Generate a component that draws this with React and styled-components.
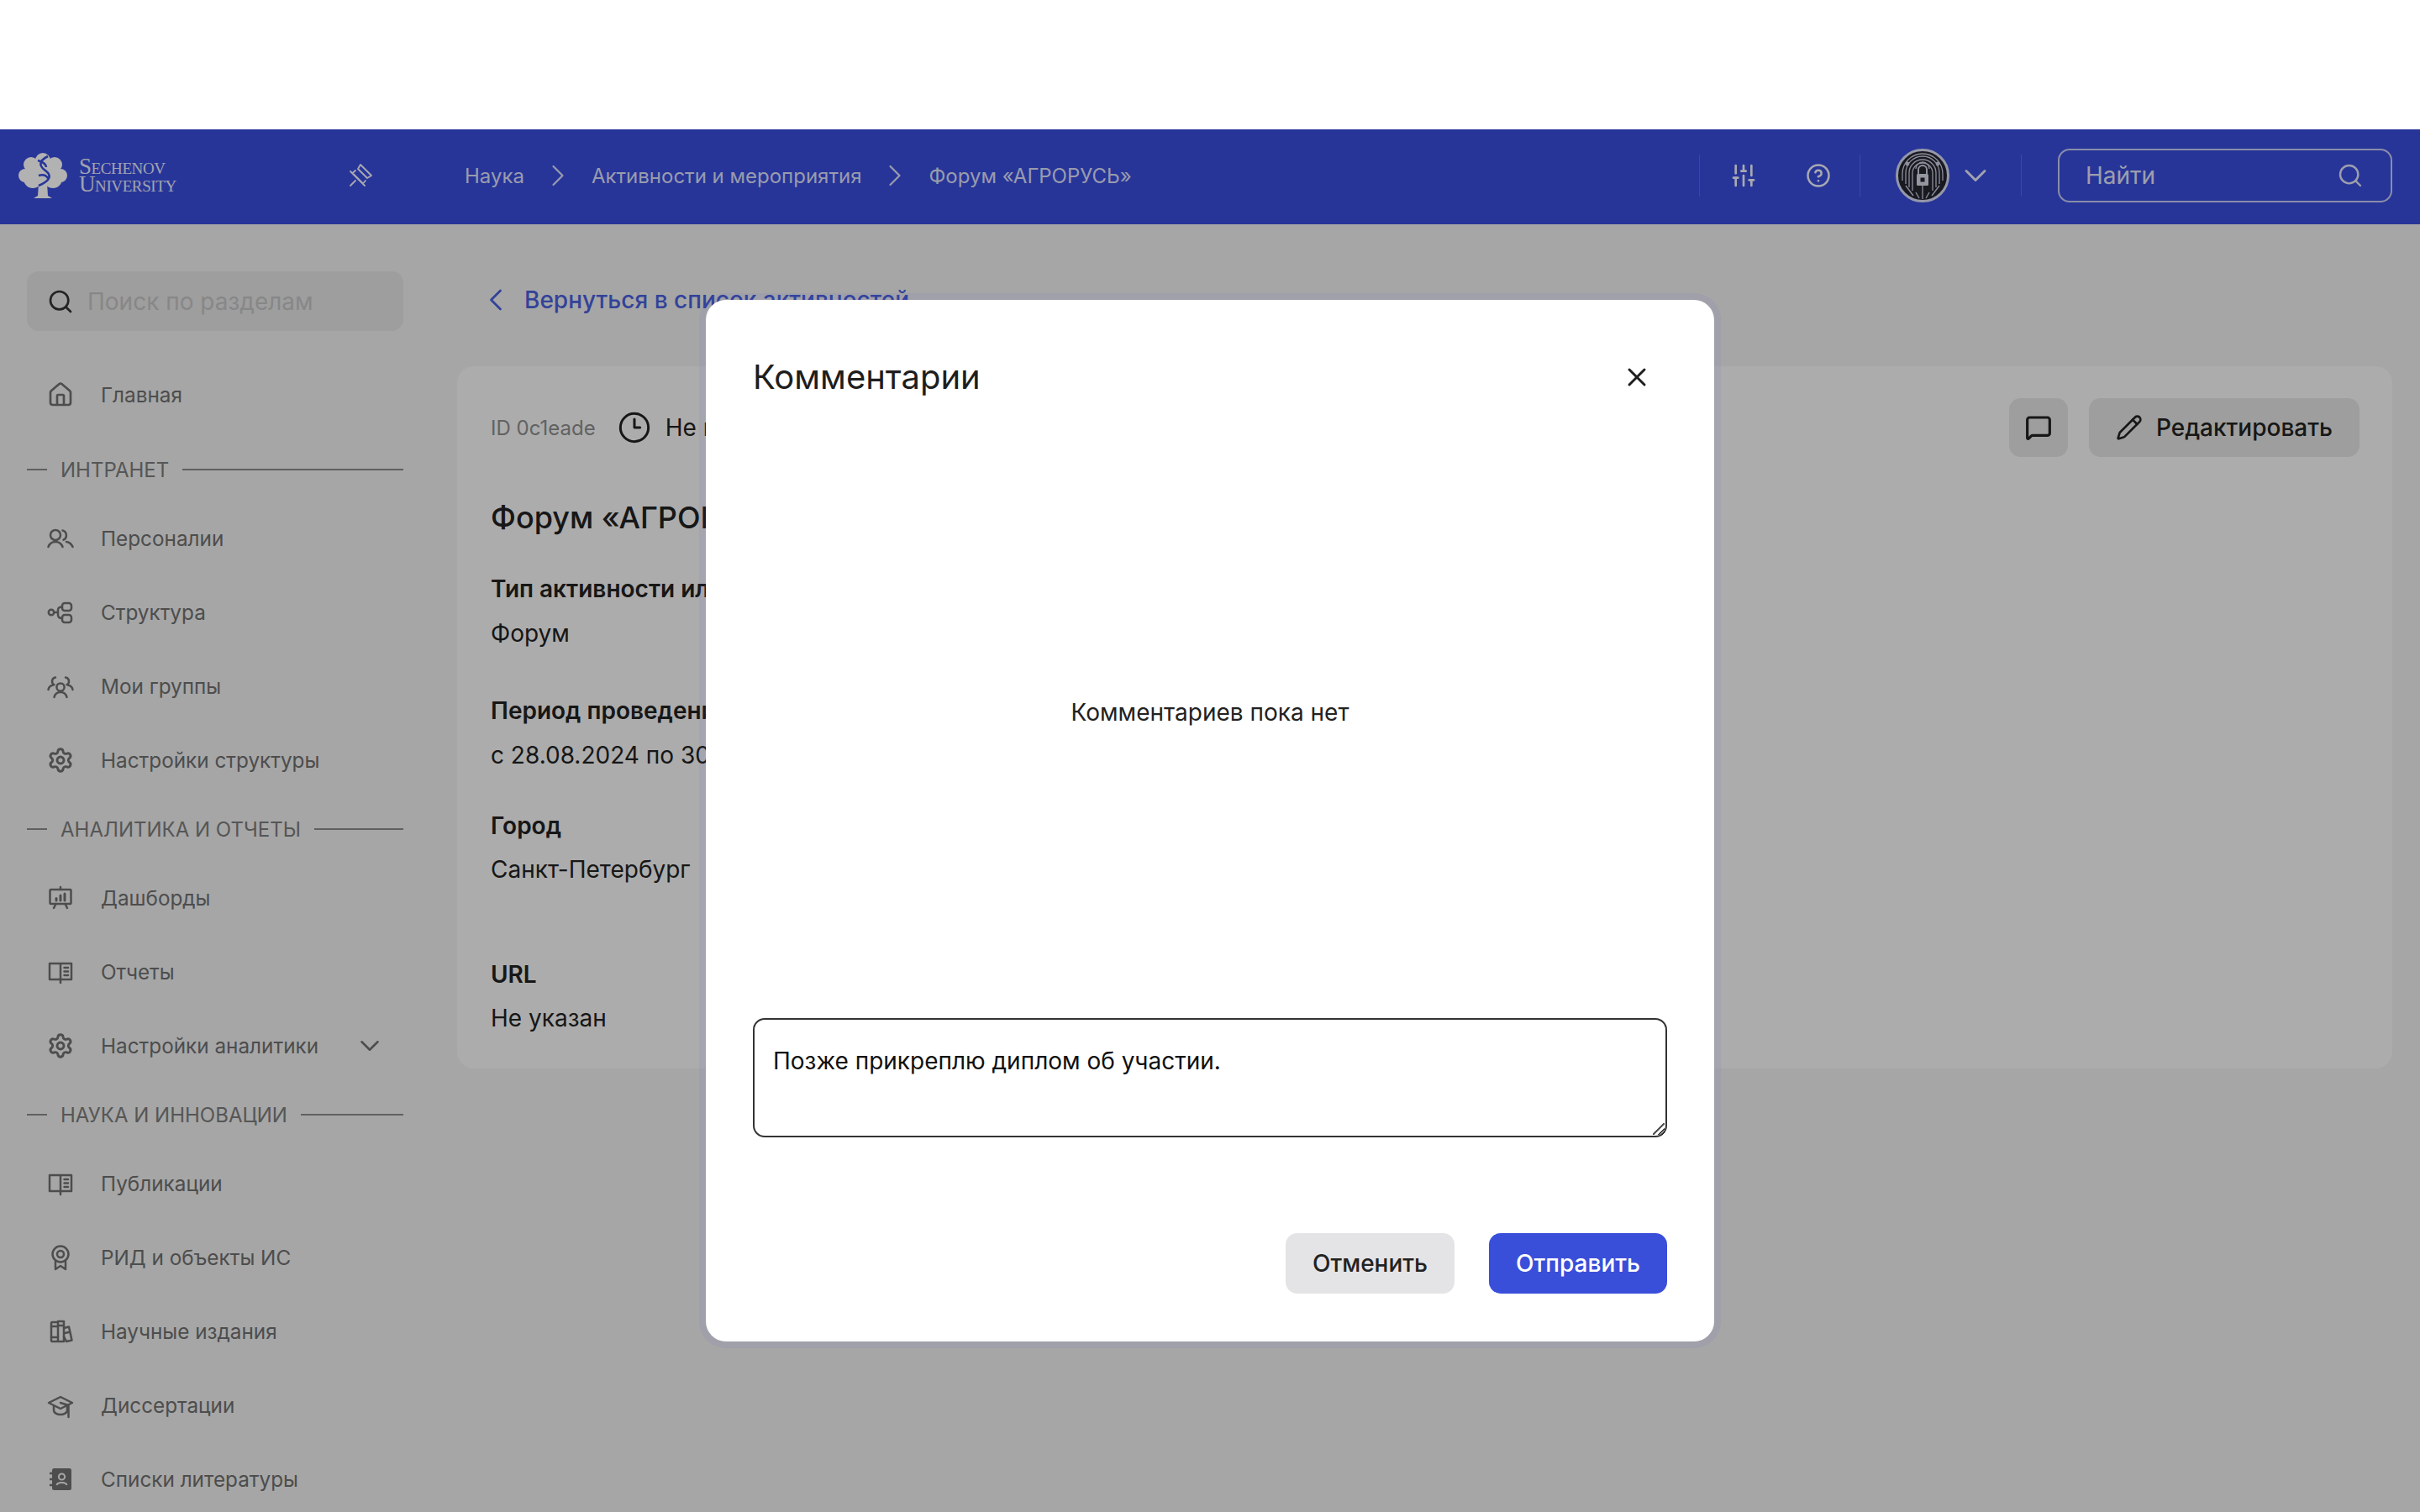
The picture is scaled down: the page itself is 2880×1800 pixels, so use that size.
import styled, { createGlobalStyle } from 'styled-components';
import {
  ChevronDown,
  ChevronLeft,
  ChevronRight,
  CircleHelp,
  Clock3,
  House,
  MessageSquare,
  Pencil,
  Search,
  Settings,
  SlidersVertical,
  X,
} from 'lucide-react';

const GlobalStyle = createGlobalStyle`
  * { box-sizing: border-box; }
  html, body { margin: 0; background: #fff; }
  body { font-family: Inter, "Noto Sans", sans-serif; }
`;

const Page = styled.div`
  position: relative;
  width: 2880px;
  height: 1800px;
  overflow: hidden;
  padding-top: 154px;
  background: #fff;
`;

const Header = styled.header`
  display: flex;
  align-items: center;
  height: 113px;
  padding: 0 33px 3px 0;
  background: #384cdc;
  color: #fff;
`;

const LogoBox = styled.div`
  display: flex;
  align-items: center;
  gap: 13px;
  width: 414px;
  padding-left: 21px;
`;

const LogoText = styled.div`
  font-family: "Liberation Serif", serif;
  font-variant: small-caps;
  font-size: 27px;
  line-height: 21px;
  letter-spacing: -0.4px;
  color: #e6e8fa;
`;

const PinButton = styled.div`
  display: flex;
  width: 30px;
  margin-right: 109px;
  color: #f2f3fd;
`;

const Crumbs = styled.nav`
  display: flex;
  align-items: center;
  gap: 18px;
  flex: 1;
  font-size: 24px;
  color: #dcdff8;
`;

const Tools = styled.div`
  display: flex;
  align-items: center;
`;

const Divider = styled.div`
  width: 1px;
  height: 50px;
  background: rgba(255, 255, 255, 0.16);
`;

const ToolButton = styled.div`
  display: flex;
  justify-content: center;
  width: ${(p) => p.$w}px;
  color: #f2f3fd;
`;

const Account = styled.div`
  display: flex;
  align-items: center;
  gap: 9px;
  width: 191px;
  padding-left: 42px;
  color: #e6e8fa;
`;

const HeaderSearch = styled.label`
  display: flex;
  align-items: center;
  justify-content: space-between;
  width: 398px;
  height: 64px;
  margin-left: 43px;
  padding: 0 32px 0 31px;
  border: 2px solid #c6caf2;
  border-radius: 14px;
  font-size: 28px;
  color: #e0e3f8;
`;

const Body = styled.div`
  display: grid;
  grid-template-columns: 544px 1fr;
  height: calc(100% - 113px);
  background: #eee;
`;

const Sidebar = styled.aside`
  display: flex;
  flex-direction: column;
  padding: 56px 64px 0 32px;
`;

const SideSearch = styled.div`
  display: flex;
  align-items: center;
  gap: 16px;
  height: 71px;
  margin-bottom: 32px;
  padding: 0 24px;
  border-radius: 14px;
  background: #e2e2e2;
  font-size: 28px;
  color: #c2c2c2;

  svg {
    color: #333;
  }
`;

const NavItem = styled.div`
  display: flex;
  align-items: center;
  height: 88px;
  padding-left: 16px;
  font-size: 24.3px;
  color: #6f6f6f;
`;

const NavIcon = styled.span`
  display: flex;
  justify-content: center;
  width: 48px;
  margin-right: 24px;
`;

const NavArrow = styled.span`
  display: flex;
  margin-left: auto;
  margin-right: 21px;
`;

const SectionLabel = styled.div`
  display: flex;
  align-items: center;
  height: 76px;
  margin-top: ${(p) => p.$top || 0}px;
  font-size: 24px;
  color: #7c7c7c;

  &::before {
    content: '';
    width: 24px;
    height: 2px;
    margin-right: 16px;
    background: #8a8a8a;
  }

  &::after {
    content: '';
    flex: 1;
    height: 2px;
    margin-left: 16px;
    background: #8a8a8a;
  }
`;

const Main = styled.main`
  padding: 56px 33px 0 0;
`;

const BackLink = styled.a`
  display: flex;
  align-items: center;
  gap: 12px;
  height: 68px;
  margin-bottom: 45px;
  padding-left: 24px;
  font-size: 28px;
  font-weight: 500;
  color: #4a5fdc;
`;

const Card = styled.section`
  height: 836px;
  padding: 38px 39px 0 40px;
  border-radius: 20px;
  background: #f7f7f7;
`;

const CardTop = styled.div`
  display: flex;
  align-items: center;
  height: 70px;
`;

const IdText = styled.span`
  margin-right: 26px;
  font-size: 24px;
  color: #8d8d8d;
`;

const Status = styled.span`
  display: flex;
  align-items: center;
  gap: 17px;
  flex: 1;
  font-size: 28px;
  color: #222;
`;

const CardActions = styled.div`
  display: flex;
  gap: 25px;
`;

const GrayButton = styled.button`
  display: flex;
  align-items: center;
  justify-content: center;
  gap: 16px;
  height: 70px;
  padding: 0 ${(p) => (p.$iconOnly ? 19 : 32)}px;
  border: none;
  border-radius: 14px;
  background: #e2e2e2;
  font: 500 28px Inter, sans-serif;
  color: #222;
`;

const CardTitle = styled.h1`
  margin: 48px 0 41px;
  font-size: 36px;
  line-height: 48px;
  font-weight: 500;
  color: #222;
`;

const Field = styled.div`
  display: flex;
  flex-direction: column;
  gap: ${(p) => p.$gap || 13}px;
  margin-top: ${(p) => p.$top || 0}px;
  font-size: 28px;
  line-height: 40px;
  color: #222;
`;

const FieldLabel = styled.span`
  font-weight: 600;
`;

const Overlay = styled.div`
  position: absolute;
  inset: 154px 0 0;
  display: flex;
  align-items: center;
  justify-content: center;
  background: rgba(0, 0, 0, 0.3);
`;

const Modal = styled.div`
  display: flex;
  flex-direction: column;
  width: 1200px;
  height: 1240px;
  padding: 68px 56px 57px;
  border-radius: 24px;
  background: #fff;
  box-shadow: 0 0 0 8px rgba(70, 80, 210, 0.07);
`;

const ModalHead = styled.div`
  display: flex;
  align-items: center;
  justify-content: space-between;
  padding-right: 18px;
  color: #1e1e1e;
`;

const ModalTitle = styled.h2`
  margin: 0;
  font-size: 40px;
  line-height: 48px;
  font-weight: 400;
`;

const EmptyNote = styled.div`
  display: flex;
  align-items: center;
  justify-content: center;
  flex: 1;
  padding-top: 10px;
  font-size: 28px;
  color: #222;
`;

const CommentBox = styled.textarea`
  display: block;
  width: 100%;
  height: 142px;
  padding: 29px 22px 27px;
  border: 2px solid #333;
  border-radius: 14px;
  outline: none;
  background:
    linear-gradient(135deg, transparent 45%, #555 45%, #555 55%, transparent 55%, transparent 70%, #555 70%, #555 80%, transparent 80%)
    no-repeat right 1px bottom 1px / 14px 14px;
  font: 28px/40px Inter, sans-serif;
  color: #111;
`;

const ModalFooter = styled.div`
  display: flex;
  justify-content: flex-end;
  gap: 41px;
  margin-top: 114px;
`;

const ModalButton = styled.button`
  height: 72px;
  padding: 0 32px;
  border: none;
  border-radius: 14px;
  background: ${(p) => (p.$primary ? '#3a4fd9' : '#e4e4e6')};
  color: ${(p) => (p.$primary ? '#fff' : '#222')};
  font: 500 28px Inter, sans-serif;
`;

const Logo = () => (
  <svg width="60" height="62" viewBox="0 0 60 62">
    <g fill="#fff">
      <circle cx="30" cy="13" r="9" />
      <circle cx="16" cy="18" r="9" />
      <circle cx="44" cy="18" r="9" />
      <circle cx="9" cy="31" r="8" />
      <circle cx="51" cy="31" r="8" />
      <circle cx="18" cy="35" r="11" />
      <circle cx="42" cy="35" r="11" />
      <circle cx="30" cy="28" r="14" />
      <path d="M25 40h10l1 15 5 3H19l5-3z" />
    </g>
    <path d="M36 8c-12 6-10 12-3 17 8 6 6 12-8 18M24 13c8 2 10 6 10 8M25 31c6-2 9 0 11 3" fill="none" stroke="#384cdc" strokeWidth="2.6" />
  </svg>
);

const Avatar = () => (
  <svg width="64" height="64" viewBox="0 0 64 64">
    <circle cx="32" cy="32" r="30.5" fill="#24252f" stroke="#d6daf2" strokeWidth="3" />
    <g fill="none" stroke="#c9cde0" strokeWidth="1.3">
      <path d="M8 38V30a24 24 0 0 1 48 0v8" />
      <path d="M12 42V29a20 20 0 0 1 40 0v13" />
      <path d="M16 46V29a16 16 0 0 1 32 0v17" />
      <path d="M20 50V29a12 12 0 0 1 24 0v21" />
      <path d="M24 24a8 8 0 0 1 16 0" />
      <path d="M27 30v-5a5 5 0 0 1 10 0v5" strokeWidth="2" />
      <path d="M32 44v16M24 52l4 7M40 52l-4 7M12 44l9 12M52 44l-9 12" />
    </g>
    <circle cx="14" cy="18" r="2.4" fill="#c9cde0" />
    <circle cx="50" cy="18" r="2.4" fill="#c9cde0" />
    <rect x="25" y="30" width="14" height="14" rx="1.5" fill="#d5d8e6" />
    <rect x="29.5" y="34.5" width="5" height="5" fill="#24252f" />
  </svg>
);

const PinIcon = () => (
  <svg width="30" height="30" viewBox="0 0 30 30" fill="none" stroke="currentColor" strokeWidth="1.8" strokeLinecap="round" strokeLinejoin="round">
    <path d="M15 2l13 13-5 3-11-11z" />
    <path d="M3 10l17 17M9 9 5.500 12 18 24.500l3-3.500M3 27l6-6" />
  </svg>
);

const Glyph = ({ children }) => (
  <svg width="32" height="32" viewBox="0 0 32 32" fill="none" stroke="currentColor" strokeWidth="2.5" strokeLinecap="round" strokeLinejoin="round">
    {children}
  </svg>
);

const PeopleIcon = () => (
  <Glyph>
    <circle cx="10" cy="12" r="6" />
    <path d="M1.500 26c1.500-4 5-6 8.500-6s7 2 8.500 6" />
    <path d="M18.500 6.500a6 6 0 0 1 1 11.200" />
    <path d="M23 20c3.500.5 6 2.500 7.500 6" />
  </Glyph>
);

const StructureIcon = () => (
  <Glyph>
    <circle cx="5" cy="16" r="3.200" />
    <rect x="18" y="5" width="11" height="9" rx="3" />
    <rect x="18" y="19" width="11" height="9" rx="3" />
    <path d="M8.500 16h4M18 9.500c-4 0-5 1.500-5 3.500v6c0 2 1 4 5 4" />
  </Glyph>
);

const GroupIcon = () => (
  <Glyph>
    <circle cx="16" cy="17" r="4.600" />
    <path d="M8.500 29c1-4 4-6 7.500-6s6.500 2 7.500 6" />
    <path d="M10 5.500a4.500 4.500 0 0 0-1.500 8.500M1.500 20c.5-3 3-5 6-5.500" />
    <path d="M22 5.500a4.500 4.500 0 0 1 1.500 8.500M30.500 20c-.5-3-3-5-6-5.500" />
  </Glyph>
);

const DashboardIcon = () => (
  <Glyph>
    <rect x="3.500" y="6" width="25" height="17" rx="1" />
    <path d="M16 3v3M10.500 23l-2.500 5M21.500 23l2.500 5" />
    <path d="M11 19v-2.500M16 19v-6M21 19V11" strokeWidth="3" />
  </Glyph>
);

const BookIcon = () => (
  <Glyph>
    <path d="M3 6h26v19H3zM16 6v23" />
    <path d="M20.500 11H25M20.500 15.500H25M20.500 20H25" />
  </Glyph>
);

const AwardIcon = () => (
  <Glyph>
    <circle cx="16" cy="12" r="9.500" />
    <circle cx="16" cy="12" r="4" />
    <path d="M10 20.500V30l6-4 6 4v-9.500" />
  </Glyph>
);

const BooksIcon = () => (
  <Glyph>
    <rect x="5" y="5" width="8" height="23" rx="1" />
    <path d="M13 4h7v24h-7M5 10h8M5 23h8M13 9h7" />
    <path d="M20 12l6-1.500 3.500 16-6.500 1.500-3-6M21.500 18l6-1.500" />
  </Glyph>
);

const HatIcon = () => (
  <Glyph>
    <path d="M2 13 16 6l14 7-14 7z" />
    <path d="M8 16.500V22c0 3 4 5 8 5s8-2 8-5v-5.500" />
    <path d="M16 13l9.500 3v14" />
  </Glyph>
);

const ContactsIcon = () => (
  <svg width="32" height="32" viewBox="0 0 32 32">
    <rect x="6" y="3" width="23" height="26" rx="2.500" fill="currentColor" />
    <path d="M3 9h6M3 16h6M3 23h6" stroke="currentColor" strokeWidth="2.400" />
    <circle cx="17.500" cy="13" r="3.600" fill="none" stroke="#eee" strokeWidth="2" />
    <path d="M11.500 23c1-4 11-4 12 0" fill="none" stroke="#eee" strokeWidth="2" />
  </svg>
);

const GearIcon = () => <Settings size={32} strokeWidth={2.2} />;

const sidebar = [
  { label: 'Главная', icon: <House size={32} strokeWidth={2} /> },
  { section: 'ИНТРАНЕТ', top: 7 },
  { label: 'Персоналии', icon: <PeopleIcon /> },
  { label: 'Структура', icon: <StructureIcon /> },
  { label: 'Мои группы', icon: <GroupIcon /> },
  { label: 'Настройки структуры', icon: <GearIcon /> },
  { section: 'АНАЛИТИКА И ОТЧЕТЫ' },
  { label: 'Дашборды', icon: <DashboardIcon /> },
  { label: 'Отчеты', icon: <BookIcon /> },
  { label: 'Настройки аналитики', icon: <GearIcon />, arrow: true },
  { section: 'НАУКА И ИННОВАЦИИ' },
  { label: 'Публикации', icon: <BookIcon /> },
  { label: 'РИД и объекты ИС', icon: <AwardIcon /> },
  { label: 'Научные издания', icon: <BooksIcon /> },
  { label: 'Диссертации', icon: <HatIcon /> },
  { label: 'Списки литературы', icon: <ContactsIcon /> },
];

const App = () => (
  <Page>
    <GlobalStyle />
    <Header>
      <LogoBox>
        <Logo />
        <LogoText>
          Sechenov
          <br />
          University
        </LogoText>
      </LogoBox>
      <PinButton>
        <PinIcon />
      </PinButton>
      <Crumbs>
        <span>Наука</span>
        <ChevronRight size={44} strokeWidth={1.2} />
        <span>Активности и мероприятия</span>
        <ChevronRight size={44} strokeWidth={1.2} />
        <span>Форум «АГРОРУСЬ»</span>
      </Crumbs>
      <Tools>
        <Divider />
        <ToolButton $w={104}>
          <SlidersVertical size={32} strokeWidth={2} />
        </ToolButton>
        <ToolButton $w={74}>
          <CircleHelp size={30} strokeWidth={2} />
        </ToolButton>
        <ToolButton $w={12} />
        <Divider />
        <Account>
          <Avatar />
          <ChevronDown size={44} strokeWidth={1.6} />
        </Account>
        <Divider />
        <HeaderSearch>
          Найти
          <Search size={32} strokeWidth={1.8} />
        </HeaderSearch>
      </Tools>
    </Header>
    <Body>
      <Sidebar>
        <SideSearch>
          <Search size={32} strokeWidth={2} />
          Поиск по разделам
        </SideSearch>
        {sidebar.map((item) =>
          item.section ? (
            <SectionLabel key={item.section} $top={item.top}>
              {item.section}
            </SectionLabel>
          ) : (
            <NavItem key={item.label}>
              <NavIcon>{item.icon}</NavIcon>
              {item.label}
              {item.arrow && (
                <NavArrow>
                  <ChevronDown size={38} strokeWidth={1.6} />
                </NavArrow>
              )}
            </NavItem>
          ),
        )}
      </Sidebar>
      <Main>
        <BackLink>
          <ChevronLeft size={44} strokeWidth={1.5} />
          Вернуться в список активностей
        </BackLink>
        <Card>
          <CardTop>
            <IdText>ID 0c1eade</IdText>
            <Status>
              <Clock3 size={40} strokeWidth={1.8} />
              Не начато
            </Status>
            <CardActions>
              <GrayButton $iconOnly>
                <MessageSquare size={32} strokeWidth={2.4} />
              </GrayButton>
              <GrayButton>
                <Pencil size={32} strokeWidth={2} />
                Редактировать
              </GrayButton>
            </CardActions>
          </CardTop>
          <CardTitle>Форум «АГРОРУСЬ»</CardTitle>
          <Field>
            <FieldLabel>Тип активности или мероприятия</FieldLabel>
            Форум
          </Field>
          <Field $top={52}>
            <FieldLabel>Период проведения</FieldLabel>
            с 28.08.2024 по 30.08.2024
          </Field>
          <Field $top={44} $gap={12}>
            <FieldLabel>Город</FieldLabel>
            Санкт-Петербург
          </Field>
          <Field $top={85} $gap={12}>
            <FieldLabel>URL</FieldLabel>
            Не указан
          </Field>
        </Card>
      </Main>
    </Body>
    <Overlay>
      <Modal>
        <ModalHead>
          <ModalTitle>Комментарии</ModalTitle>
          <X size={36} strokeWidth={2} />
        </ModalHead>
        <EmptyNote>Комментариев пока нет</EmptyNote>
        <CommentBox defaultValue="Позже прикреплю диплом об участии." />
        <ModalFooter>
          <ModalButton>Отменить</ModalButton>
          <ModalButton $primary>Отправить</ModalButton>
        </ModalFooter>
      </Modal>
    </Overlay>
  </Page>
);

export default App;
